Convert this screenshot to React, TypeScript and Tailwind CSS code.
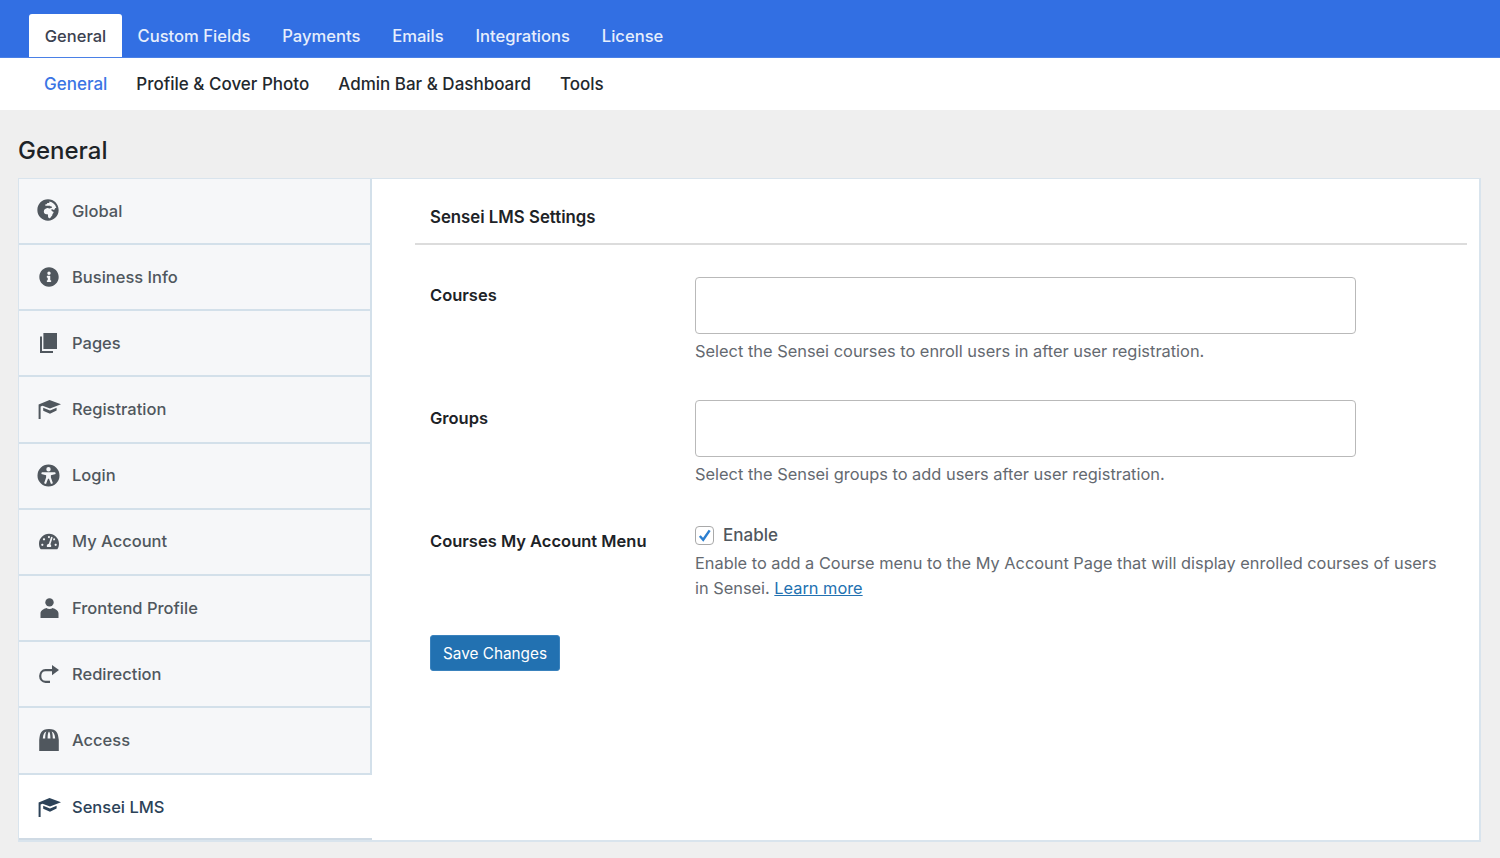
import React from 'react';
import { FaGlobeAfrica, FaInfoCircle, FaTachometerAlt } from 'react-icons/fa';

const Cap = ({ className = '' }: { className?: string }) => (
  <svg viewBox="0 0 23 19" className={className} fill="currentColor">
    <path d="M11.5 0 L23 4.2 L12 8.4 L4.6 5.8 L2.6 6.6 V19 H0.6 V4.6 Z" />
    <path d="M5.2 7.8 L12 10.4 L18.6 7.8 V10.4 L12 13.8 L5.2 10.8 Z" />
  </svg>
);

const Pages = ({ className = '' }: { className?: string }) => (
  <svg viewBox="0 0 17 20" className={className} fill="currentColor">
    <path d="M3.4 0 H17 V16 H3.4 Z" />
    <path d="M0 3.4 H2 V18 H13 V20 H0 Z" />
  </svg>
);

const Person = ({ className = '' }: { className?: string }) => (
  <svg viewBox="0 0 19 20" className={className} fill="currentColor">
    <circle cx="9.5" cy="4.4" r="4.2" />
    <path d="M0.5 20 V15.5 C0.5 12.5 3.5 11 6.3 10 C8 11.4 11 11.4 12.7 10 C15.5 11 18.5 12.5 18.5 15.5 V20 Z" />
  </svg>
);

const Redo = ({ className = '' }: { className?: string }) => (
  <svg viewBox="0 0 20 18" className={className} fill="none" stroke="currentColor">
    <path d="M11 16.8 H6.5 C3.4 16.8 1.2 14.3 1.2 11 C1.2 7.7 3.4 5.2 6.5 5.2 H14" strokeWidth="2.2" />
    <path d="M13 0 L20 5 L13 10.2 Z" fill="currentColor" stroke="none" />
  </svg>
);

const Store = ({ className = '' }: { className?: string }) => (
  <svg viewBox="0 0 20 22" className={className} fill="currentColor">
    <path fillRule="evenodd" d="M0.2 11 C1 4 2 0 10 0 C18 0 19 4 19.8 11 V22 H0.2 Z M3.8 9.5 H6.2 C6.2 6 6.6 3.5 7.4 2.6 C5.2 3.2 4.2 5.5 3.8 9.5 Z M8.6 9.5 H11.4 C11.4 6 11 3.4 10 2.6 C9 3.4 8.6 6 8.6 9.5 Z M13.8 9.5 H16.2 C15.8 5.5 14.8 3.2 12.6 2.6 C13.4 3.5 13.8 6 13.8 9.5 Z" />
  </svg>
);

const Access = ({ className = '' }: { className?: string }) => (
  <svg viewBox="0 0 24 24" className={className} fill="currentColor">
    <path fillRule="evenodd" d="M12 0.5 A11.5 11.5 0 1 1 12 23.5 A11.5 11.5 0 1 1 12 0.5 Z M12 3.2 A2.3 2.3 0 1 0 12 7.8 A2.3 2.3 0 1 0 12 3.2 Z M5 8.6 L4.5 10.4 L9.5 11.8 V14.2 L7.4 20.2 L9.4 20.9 L11.5 15.4 H12.5 L14.6 20.9 L16.6 20.2 L14.5 14.2 V11.8 L19.5 10.4 L19 8.6 Z" />
  </svg>
);

const topTabs = ['Custom Fields', 'Payments', 'Emails', 'Integrations', 'License'];
const subTabs = ['Profile & Cover Photo', 'Admin Bar & Dashboard', 'Tools'];

const sideItems = [
  { label: 'Global', icon: <FaGlobeAfrica className="w-[22px] h-[22px] -mt-[2px] -ml-[2px]" /> },
  { label: 'Business Info', icon: <FaInfoCircle className="w-[20px] h-[20px]" /> },
  { label: 'Pages', icon: <Pages className="w-[17px] h-[20px] ml-[1px]" /> },
  { label: 'Registration', icon: <Cap className="w-[23px] h-[19px] -ml-[1px]" /> },
  { label: 'Login', icon: <Access className="w-[23px] h-[23px] -ml-[2px]" /> },
  { label: 'My Account', icon: <FaTachometerAlt className="w-[20px] h-[19px]" /> },
  { label: 'Frontend Profile', icon: <Person className="w-[19px] h-[20px] ml-[1px]" /> },
  { label: 'Redirection', icon: <Redo className="w-[20px] h-[18px]" /> },
  { label: 'Access', icon: <Store className="w-[20px] h-[22px]" /> },
];

export default function App() {
  return (
    <div className="h-[858px] overflow-hidden bg-[#efefef] font-['Inter',sans-serif] text-[16.5px] leading-[25px] antialiased">
      <div className="h-[58px] bg-[#326fe3] flex items-end pl-[29px] border-b border-[#4a80e6]">
        <div className="h-[43px] w-[93px] pt-[2px] bg-white rounded-t-[3px] text-[#3c4250] font-medium flex items-center justify-center">General</div>
        <div className="h-[43px] pt-[2px] flex items-center gap-[31.8px] pl-[15.5px] text-[#e6eefc] font-medium text-[16.6px]">
          {topTabs.map(t => <span key={t}>{t}</span>)}
        </div>
      </div>

      <div className="h-[52px] bg-white flex items-center pl-[44px] gap-[29px] font-medium text-[17px] text-[#23282d]">
        <span className="text-[#3a75e4]">General</span>
        {subTabs.map(t => <span key={t}>{t}</span>)}
      </div>

      <h1 className="h-[68px] pl-[18px] pt-[25px] text-[24px] leading-[32px] font-medium text-[#1d2327]">General</h1>

      <div className="ml-[18px] w-[1463px] h-[664px] flex bg-white border-2 border-[#d9e4ed] border-l border-t">
        <div className="w-[353px] shrink-0 flex flex-col">
          <div className="bg-[#f6f7f9] border-r-2 border-[#d3e0ea]">
            {sideItems.map(item => (
              <div key={item.label} className="h-[66.2px] first:h-[66px] flex items-center pl-[20px] text-[#50575e] font-medium border-b-2 border-[#d3e0ea]">
                <span className="w-[33px] flex items-center">{item.icon}</span>
                {item.label}
              </div>
            ))}
          </div>
          <div className="h-[66.5px] pt-[2px] flex items-center pl-[20px] text-[#2c4258] font-medium border-b-2 border-[#cfdae4]">
            <span className="w-[33px] flex items-center"><Cap className="w-[23px] h-[19px] -ml-[1px]" /></span>
            Sensei LMS
          </div>
        </div>

        <div className="flex-1 pl-[43px] pr-[12px] text-[#1d2327]">
          <div className="h-[66px] pl-[15px] pt-[26px] border-b-2 border-[#dcdcdc] font-semibold text-[16.8px]">Sensei LMS Settings</div>

          <div className="pl-[15px] pt-[32px]">
            <div className="flex h-[123px]">
              <div className="w-[265px] pt-[6px] font-semibold">Courses</div>
              <div>
                <div className="w-[661px] h-[57px] rounded-[4px] border border-[#b9b9b9] bg-white" />
                <p className="mt-[5px] text-[#646970] text-[16.4px]">Select the Sensei courses to enroll users in after user registration.</p>
              </div>
            </div>

            <div className="flex h-[123px]">
              <div className="w-[265px] pt-[6px] font-semibold">Groups</div>
              <div>
                <div className="w-[661px] h-[57px] rounded-[4px] border border-[#b9b9b9] bg-white" />
                <p className="mt-[5px] text-[#646970] text-[16.4px]">Select the Sensei groups to add users after user registration.</p>
              </div>
            </div>

            <div className="flex">
              <div className="w-[265px] pt-[6px] font-semibold">Courses My Account Menu</div>
              <div className="w-[750px]">
                <div className="flex items-center gap-[9px] h-[25px] font-medium text-[17px] text-[#50575e]">
                  <span className="w-[19px] h-[19px] rounded-[4px] border border-[#a9a9a9] bg-white flex items-center justify-center">
                    <svg viewBox="0 0 16 16" className="w-[15px] h-[15px]" fill="none" stroke="#2b7fd0" strokeWidth="2.6">
                      <path d="M3 8.5 L6.6 12.5 L13.5 2.5" />
                    </svg>
                  </span>
                  Enable
                </div>
                <p className="mt-[3px] text-[#646970] text-[16.35px]">
                  Enable to add a Course menu to the My Account Page that will display enrolled courses of users in Sensei.{' '}
                  <a href="#" className="text-[#2271b1] underline">Learn more</a>
                </p>
              </div>
            </div>

            <button className="mt-[34px] w-[130px] h-[36px] rounded-[3px] bg-[#2271b1] text-white text-[15.3px] border border-[#3a82bd]">Save Changes</button>
          </div>
        </div>
      </div>
    </div>
  );
}
